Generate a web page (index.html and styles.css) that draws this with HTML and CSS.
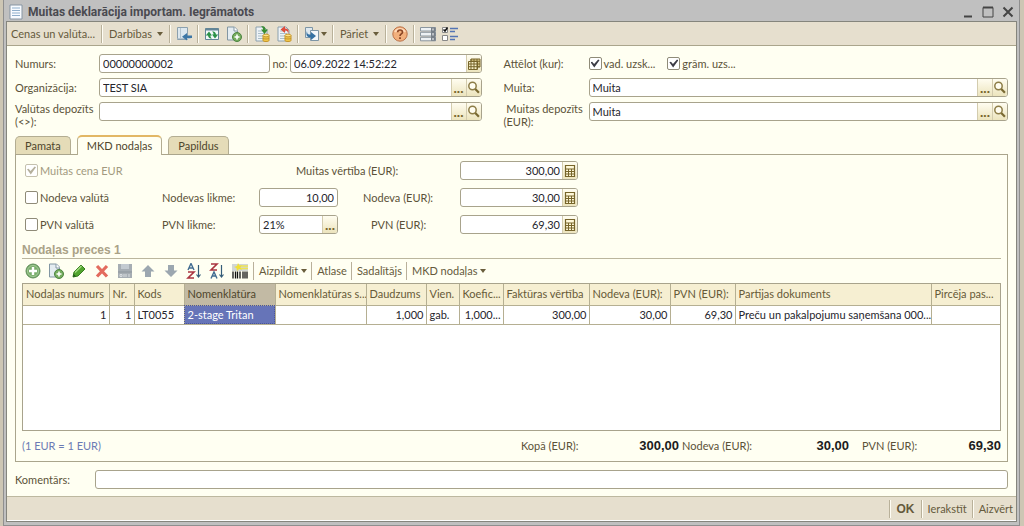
FILE: index.html
```html
<!DOCTYPE html>
<html lang="lv">
<head>
<meta charset="utf-8">
<title>Muitas deklarācija importam</title>
<link rel="stylesheet" href="styles.css">
</head>
<body>
<svg class="defs" aria-hidden="true">
  <symbol id="lens" viewBox="0 0 14 16"><circle cx="5.5" cy="6" r="3.7" fill="#fffdf0" stroke="#8d7d47" stroke-width="1.5"/><path d="M8.3 9l3.6 3.7" stroke="#7a6a32" stroke-width="2.2"/></symbol>
  <symbol id="calc" viewBox="0 0 14 16"><path d="M2.5 2.500h9v11h-9z" fill="#fff8d8" stroke="#77652a" stroke-width="1.200"/><path d="M2.500 6h9M2.500 8.500h9M2.500 11h9M5.500 6v7M8.500 6v7" stroke="#77652a"/></symbol>
  <symbol id="page" viewBox="0 0 16 16"><path d="M2 1h8l3 3v11H2z" fill="#eef3f6" stroke="#8ba0ae"/><path d="M4 5h6M4 7.500h7M4 10h7M4 12.500h5" stroke="#a9bdca"/></symbol>
  <symbol id="plusdoc" viewBox="0 0 16 16"><path d="M1.500 1h7l3 3v10h-10z" fill="#e4ecf1" stroke="#8296a3"/><path d="M8 1v4h4" fill="#fff" stroke="#8296a3"/><circle cx="11" cy="11" r="4.500" fill="#75ac5e" stroke="#4c8340"/><path d="M8.500 11h5M11 8.500v5" stroke="#fff" stroke-width="1.600"/></symbol>
  <symbol id="coins" viewBox="0 0 16 16"><path d="M9 9.500v5c0 1.400 6 1.400 6 0v-5" fill="#f0c64a" stroke="#c5962c"/><ellipse cx="12" cy="9.500" rx="3" ry="1.400" fill="#ffe487" stroke="#c5962c"/><path d="M9 12c0 1.300 6 1.300 6 0" fill="none" stroke="#c5962c"/></symbol>
</svg>
<main class="window">
  <header class="titlebar">
    <svg class="icon" viewBox="0 0 16 16"><path d="M2 1h12v14H2z" fill="#f8fbff" stroke="#8795a3"/><path d="M4 4h8M4 6.500h8M4 9h8M4 11.500h8" stroke="#8faecb"/></svg>
    <h1>Muitas deklarācija importam. Iegrāmatots</h1>
    <div class="winbuttons">
      <button aria-label="Minimizēt"><svg viewBox="0 0 12 12"><path d="M2 10.500h8" stroke="#444" stroke-width="2"/></svg></button>
      <button aria-label="Maksimizēt"><svg viewBox="0 0 12 12"><path d="M1 1.500h10v9.500H1z" fill="none" stroke="#444"/><path d="M1 1.500h10" stroke="#444" stroke-width="2"/></svg></button>
      <button aria-label="Aizvērt logu"><svg viewBox="0 0 12 12"><path d="M1.500 1.500l9 9M10.500 1.500l-9 9" stroke="#444" stroke-width="2"/></svg></button>
    </div>
  </header>
  <div class="frame">
    <nav class="toolbar">
      <button class="text">Cenas un valūta...</button><i class="sep"></i>
      <button class="text">Darbības<b class="caret"></b></button><i class="sep"></i>
      <button aria-label="Atrast sarakstā"><svg class="icon" viewBox="0 0 16 16"><path d="M1.500 1.500h10v12h-10z" fill="#dce7ee" stroke="#8ba0ae"/><path d="M4.500 2v11M1.500 12.500h13" stroke="#b4c4cf"/><path d="M16 9.500h-5V7l-5 3.800 5 3.700V12h5z" fill="#3c76a5"/></svg></button><i class="sep"></i>
      <button aria-label="Atjaunot"><svg class="icon" viewBox="0 0 16 16"><path d="M1.500 2.500h13v11h-13z" fill="#f2f8fa" stroke="#638597"/><path d="M1.500 3.500h13" stroke="#638597" stroke-width="2"/><path d="M5 5.500L1.800 9.500H4c.2 2.500 2 3 4 3C6.500 11.500 6.500 10.500 6.500 9.500H8zM11 12.500l3.200-4H12c-.2-2.500-2-3-4-3 1.500 1 1.500 2 1.500 3H8z" fill="#2a9147"/></svg></button>
      <button aria-label="Kopēt"><svg class="icon"><use href="#plusdoc"/></svg></button><i class="sep"></i>
      <button aria-label="Grāmatot"><svg class="icon" viewBox="0 0 16 16"><use href="#page"/><use href="#coins"/><path d="M7 0c3 0 4.500 1 4.500 3.500H14L10.500 8 7 3.500h2C9 1.500 8 1 7 0z" fill="#3a8d32"/></svg></button>
      <button aria-label="Atcelt grāmatošanu"><svg class="icon" viewBox="0 0 16 16"><use href="#page"/><use href="#coins"/><path d="M12 8c0-3-1-3.500-3-3.500V7L4.500 3.500 9 0v2.500c3 0 4.500 1.500 3 5.500z" fill="#dd4c3b"/></svg></button><i class="sep"></i>
      <button class="drop" aria-label="Ievadīt uz pamata"><svg class="icon" viewBox="0 0 16 16"><path d="M1.500 1.500h7v10h-7z" fill="#dfe9ef" stroke="#7d95a5"/><path d="M6.500 4.500h8v10h-8z" fill="#f3f7fa" stroke="#7d95a5"/><path d="M3 5c0 3 1 3.500 4 3.500V6l5 4-5 4v-2.500C3 11.500 1.500 9 3 5z" fill="#3571a3"/></svg><b class="caret"></b></button><i class="sep"></i>
      <button class="text">Pāriet<b class="caret"></b></button><i class="sep"></i>
      <button aria-label="Palīdzība"><svg class="icon" viewBox="0 0 16 16"><circle cx="8" cy="8" r="7.200" fill="#f2b07c" stroke="#bb7248"/><path d="M3 6c2-4 8-4 10 0" fill="none" stroke="#ffd8b6" stroke-width="2"/><path d="M5.700 6.200c0-3 4.800-3 4.800 0C10.500 8 8 8 8 10" fill="none" stroke="#8a4524" stroke-width="1.600"/><path d="M8 11.300v1.700" stroke="#8a4524" stroke-width="1.800"/></svg></button><i class="sep"></i>
      <button aria-label="Saraksts"><svg class="icon" viewBox="0 0 16 16"><path d="M.5 1.500h15v3.500H.5zM.5 6.300h15V10H.5zM.5 11.300h15v3.500H.5z" fill="#edf1f4" stroke="#8b969f"/><path d="M11 1.500h4.500v13.300H11z" fill="#777f88"/><path d="M13 2.500v2M13 7v2.500M13 12v2" stroke="#fff"/></svg></button>
      <button aria-label="Iestatījumi"><svg class="icon" viewBox="0 0 16 16"><path d="M.5 1.500h5v5h-5zM.5 9.500h5v5h-5z" fill="#fff" stroke="#888"/><path d="M1.500 3.500L3 5l2.500-3.500" fill="none" stroke="#111" stroke-width="1.500"/><path d="M8 2.500h8M8 5.500h5M8 10.500h8M8 13.500h5" stroke="#5475b5" stroke-width="1.600"/></svg></button>
    </nav>
    <form class="content">
      <section class="fields">
        <label for="num">Numurs:</label>
        <div class="pair">
          <input class="box" id="num" value="00000000002">
          <label for="date">no:</label>
          <div class="box combo"><input id="date" value="06.09.2022 14:52:22"><button type="button" aria-label="Kalendārs"><svg viewBox="0 0 14 16"><path d="M4 3h9v8H4z" fill="#d9c987" stroke="#77652a"/><path d="M1.500 5.500h9v8h-9z" fill="#f6eec6" stroke="#77652a"/><path d="M4 3v10M7 3v10M10 3v10M2 8h11M2 10.700h11M4 5.300h9" stroke="#77652a"/></svg></button></div>
        </div>
        <span class="second">Attēlot (kur):</span>
        <div class="checks"><label><input type="checkbox" checked>vad. uzsk...</label><label><input type="checkbox" checked>grām. uzs...</label></div>

        <label for="org">Organizācija:</label>
        <div class="box combo"><input id="org" value="TEST SIA"><button type="button" class="dots">...</button><button type="button" aria-label="Atvērt"><svg><use href="#lens"/></svg></button></div>
        <label class="second" for="muita">Muita:</label>
        <div class="box combo"><input id="muita" value="Muita"><button type="button" class="dots">...</button><button type="button" aria-label="Atvērt"><svg><use href="#lens"/></svg></button></div>

        <label class="two" for="vdep">Valūtas depozīts<br>(&lt;&gt;):</label>
        <div class="box combo"><input id="vdep"><button type="button" class="dots">...</button><button type="button" aria-label="Atvērt"><svg><use href="#lens"/></svg></button></div>
        <label class="second two" for="mdep">&nbsp;Muitas depozīts<br>(EUR):</label>
        <div class="box combo"><input id="mdep" value="Muita"><button type="button" class="dots">...</button><button type="button" aria-label="Atvērt"><svg><use href="#lens"/></svg></button></div>
      </section>

      <div class="tabs"><button type="button">Pamata</button><button type="button" class="active">MKD nodaļas</button><button type="button">Papildus</button></div>
      <section class="panel">
        <div class="rates">
          <label class="off"><input type="checkbox" checked disabled>Muitas cena EUR</label>
          <label class="wide" for="mv">Muitas vērtība (EUR):</label>
          <div class="box combo num"><input id="mv" value="300,00"><button type="button" aria-label="Kalkulators"><svg><use href="#calc"/></svg></button></div>

          <label><input type="checkbox">Nodeva valūtā</label>
          <label for="nl">Nodevas likme:</label>
          <input class="box num" id="nl" value="10,00">
          <label class="mid" for="ne">Nodeva (EUR):</label>
          <div class="box combo num"><input id="ne" value="30,00"><button type="button" aria-label="Kalkulators"><svg><use href="#calc"/></svg></button></div>

          <label><input type="checkbox">PVN valūtā</label>
          <label for="pl">PVN likme:</label>
          <div class="box combo"><input id="pl" value="21%"><button type="button" class="dots">...</button></div>
          <label class="mid pvn" for="pe">PVN (EUR):</label>
          <div class="box combo num"><input id="pe" value="69,30"><button type="button" aria-label="Kalkulators"><svg><use href="#calc"/></svg></button></div>
        </div>
        <h2>Nodaļas preces 1</h2>
        <div class="toolbar inner">
          <button type="button" aria-label="Pievienot"><svg class="icon" viewBox="0 0 16 16"><circle cx="8" cy="8" r="7" fill="#79ad6b" stroke="#5e8d58"/><circle cx="8" cy="8" r="5.500" fill="none" stroke="#a5cb99"/><path d="M4 8h8M8 4v8" stroke="#fff" stroke-width="2.400"/></svg></button>
          <button type="button" aria-label="Kopēt rindu"><svg class="icon"><use href="#plusdoc"/></svg></button>
          <button type="button" aria-label="Labot"><svg class="icon" viewBox="0 0 16 16"><path d="M2 14l1-5 7-7 4 4-7 7z" fill="#52a52f" stroke="#377d22"/><path d="M4 9.500L10.500 3" stroke="#a5db84" stroke-width="1.500"/><path d="M2 14l.7-3L5 13.300z" fill="#22551a"/></svg></button>
          <button type="button" aria-label="Dzēst"><svg class="icon" viewBox="0 0 16 16"><path d="M3 3l10 10.500M13 3L3 13.500" stroke="#e36b5e" stroke-width="3.200"/></svg></button>
          <button type="button" aria-label="Pabeigt labošanu"><svg class="icon" viewBox="0 0 16 16"><path d="M1 1h14v14H1z" fill="#a6adb3"/><path d="M4 1h8v5H4z" fill="#c3cad0"/><path d="M1 9h14" stroke="#8d959c"/><path d="M3 11.500h2v2H3zM7 11v3M9 11v3M12 11v3" fill="none" stroke="#d9dde0"/></svg></button>
          <button type="button" aria-label="Uz augšu"><svg class="icon" viewBox="0 0 16 16"><path d="M8 2l6.500 6.500H11V14H5V8.500H1.500z" fill="#9ca7b0"/></svg></button>
          <button type="button" aria-label="Uz leju"><svg class="icon" viewBox="0 0 16 16"><path d="M8 14L1.500 7.500H5V2h6v5.500h3.500z" fill="#9ca7b0"/></svg></button>
          <button type="button" aria-label="Kārtot augoši"><svg class="icon" viewBox="0 0 16 16"><path d="M2 7l3-6.500L8 7M3 5h4" fill="none" stroke="#426c91" stroke-width="1.400"/><path d="M2 9h6l-6 6h6" fill="none" stroke="#aa3440" stroke-width="1.600"/><path d="M12.500 2v12M10.500 11.500l2 2.500 2-2.500" fill="none" stroke="#345c78" stroke-width="1.200"/></svg></button>
          <button type="button" aria-label="Kārtot dilstoši"><svg class="icon" viewBox="0 0 16 16"><path d="M2 1h6L2 7h6" fill="none" stroke="#aa3440" stroke-width="1.600"/><path d="M2 15.500L5 9l3 6.500M3 13h4" fill="none" stroke="#426c91" stroke-width="1.400"/><path d="M12.500 2v12M10.500 11.500l2 2.500 2-2.500" fill="none" stroke="#345c78" stroke-width="1.200"/></svg></button>
          <button type="button" aria-label="Svītrkods"><svg class="icon" viewBox="0 0 16 16"><path d="M0 1h16v7H0z" fill="#d1d6d5"/><path d="M6 0l1.500 2.500L10 2 8.500 4.500 10 7 7 6 5 8 4.500 5 2 4l3-1z" fill="#f0df35"/><path d="M9 3h7M9 5.500h7" stroke="#eee454" stroke-width="1.500"/><path d="M1 8.500v7M3.500 8.500v7M5.500 8.500v7M8 8.500v7M11 8.500v7M13 8.500v7M15 8.500v7" stroke="#111" stroke-width="1.300"/></svg></button><i class="sep"></i>
          <button type="button" class="text">Aizpildīt<b class="caret"></b></button><i class="sep"></i>
          <button type="button" class="text">Atlase</button><i class="sep"></i>
          <button type="button" class="text">Sadalītājs</button><i class="sep"></i>
          <button type="button" class="text">MKD nodaļas<b class="caret"></b></button>
        </div>
        <div class="grid">
          <table>
            <colgroup><col class="w86"><col class="w25"><col class="w50"><col class="w91"><col class="w91"><col class="w60"><col class="w33"><col class="w44"><col class="w86"><col class="w81"><col class="w65"><col><col class="w69"></colgroup>
            <thead><tr><th>Nodaļas numurs</th><th>Nr.</th><th>Kods</th><th class="sel">Nomenklatūra</th><th>Nomenklatūras s...</th><th>Daudzums</th><th>Vien.</th><th>Koefic...</th><th>Faktūras vērtība</th><th>Nodeva (EUR):</th><th>PVN (EUR):</th><th>Partijas dokuments</th><th>Pircēja pas...</th></tr></thead>
            <tbody><tr><td class="r">1</td><td class="r">1</td><td>LT0055</td><td class="cur">2-stage Tritan</td><td></td><td class="r">1,000</td><td>gab.</td><td class="r">1,000...</td><td class="r">300,00</td><td class="r">30,00</td><td class="r">69,30</td><td>Preču un pakalpojumu saņemšana 000...</td><td></td></tr></tbody>
          </table>
        </div>
        <div class="totals"><span class="rate">(1 EUR = 1 EUR)</span><span>Kopā (EUR):</span><strong>300,00</strong><span class="t2">Nodeva (EUR):</span><strong>30,00</strong><span class="t3">PVN (EUR):</span><strong>69,30</strong></div>
      </section>
      <div class="comment"><label for="com">Komentārs:</label><input class="box" id="com"></div>
    </form>
    <footer class="toolbar bottom"><i class="sep"></i><button class="ok">OK</button><i class="sep"></i><button class="text">Ierakstīt</button><i class="sep"></i><button class="text">Aizvērt</button></footer>
  </div>
</main>
</body>
</html>
```
FILE: styles.css
```css
* { box-sizing: border-box; }
body { margin: 0; background: #cdc6b4; color: #5b5238; font: 11px/16px Lato, "Liberation Sans", Arial, sans-serif; }
button, input { font: inherit; color: inherit; margin: 0; padding: 0; border: 0; background: none; }
.defs { position: absolute; width: 0; height: 0; }
.icon { width: 16px; height: 16px; display: block; }

.window { min-height: 100vh; margin: 0 4px 0 3px; padding: 0 2px 3px; background: #c0c0c0; border: 1px solid #8f8f8f; border-top: 0; display: flex; flex-direction: column; }
.titlebar { height: 21px; display: flex; align-items: center; padding: 2px 0 0 2px; }
.titlebar h1 { flex: 1; margin: 0 0 0 4px; font: bold 12px/16px Roboto, "Liberation Sans", Arial, sans-serif; color: #4a4a50; }
.winbuttons { display: flex; gap: 8px; padding-right: 3px; }
.winbuttons button, .winbuttons svg { width: 12px; height: 12px; display: block; }

.frame { flex: 1; display: flex; flex-direction: column; border: 1px solid #85857d; background: #fffff2; }
.toolbar { height: 24px; display: flex; align-items: center; background: #e6dfce; border-bottom: 1px solid #aaa58c; }
.toolbar button { display: flex; align-items: center; padding: 0 3px; white-space: nowrap; color: #655a3c; }
.toolbar .text { padding: 0 4px; }
.sep { width: 2px; height: 18px; margin: 0 2px; background: #b9b19a; border-right: 1px solid #fffdf4; }
.caret { margin-left: 5px; border: 3px solid transparent; border-top: 4px solid #695d3c; border-bottom: 0; }
.drop .caret { margin-left: 1px; }

.content { flex: 1; display: flex; flex-direction: column; padding: 8px 8px 7px 8px; }
.fields { display: grid; grid-template-columns: 84px minmax(0, 383fr) 107px minmax(0, 420fr); row-gap: 5px; grid-auto-rows: 19px; align-items: center; }
.second { padding-left: 22px; }
.two { line-height: 13px; align-self: start; white-space: nowrap; }
.pair { display: grid; grid-template-columns: 171px 20px 1fr; align-items: center; }
.pair label { text-align: center; }
.box { height: 19px; width: 100%; min-width: 0; background: #fff; border: 1px solid #a8a38c; border-radius: 3px; padding: 0 3px; color: #25252c; }
.combo { display: flex; padding: 0 0 0 3px; overflow: hidden; }
.combo input { flex: 1; min-width: 0; }
.combo button { width: 15px; border-left: 1px solid #d3ccae; background: linear-gradient(#fffdf0, #ece4bd); color: #77652a; }
.combo svg { width: 14px; height: 16px; display: block; }
.combo .dots { font-size: 14px; font-weight: bold; }
.num, .num input { text-align: right; }
.num input { padding-right: 2px; }
.checks { display: flex; gap: 12px; }
.checks label, .rates label { display: flex; align-items: center; gap: 2px; white-space: nowrap; }
input[type="checkbox"] { appearance: none; width: 13px; height: 13px; border: 1px solid #8f8b78; border-radius: 2px; background: #fff; display: grid; place-items: center; }
input[type="checkbox"]:checked::before { content: ""; width: 9px; height: 9px; background: #3c3c46; clip-path: polygon(0 35%, 18% 30%, 40% 55%, 85% 5%, 100% 15%, 42% 95%); }
.off { color: #a29a80; }
.off input[type="checkbox"]:checked::before { background: #b5b09c; }
.off input[type="checkbox"] { border-color: #c5c1ae; }

.tabs { display: flex; align-items: flex-end; gap: 6px; margin-top: 14px; }
.tabs button { height: 18px; padding: 0 9px; background: #e5dcb8; border: 1px solid #b3ad92; border-bottom: 0; border-radius: 5px 5px 0 0; color: #4f462c; }
.tabs .active { height: 20px; margin-bottom: -1px; background: #fffff2; border-top: 2px solid #e2b765; position: relative; }
.panel { flex: 1; display: flex; flex-direction: column; border: 1px solid #aaa58c; padding: 6px 6px 7px 6px; }
.rates { display: grid; grid-template-columns: 137px 97px 79px 25px 97px 118px; padding-left: 3px; row-gap: 8px; align-items: center; }
.rates .wide { grid-column: 2 / 6; padding-left: 134px; }
.rates .mid { grid-column: 4 / 6; padding-left: 25px; }
.rates .pvn { padding-left: 33px; }
.panel h2 { margin: 9px 0 0; font: bold 12px/15px "Liberation Sans", Arial, sans-serif; color: #aaa287; border-bottom: 1px solid #bbb69e; }
.inner { background: none; border: 0; padding: 0; }
.inner button { padding: 0 4px 0 3px; }
.inner .text { padding: 0 3px; }
.inner .caret { margin-left: 3px; }
.inner .sep { margin: 0 1px; }
.grid { flex: 1; min-height: 120px; background: #fff; border: 1px solid #a8a38c; }
table { width: 100%; border-collapse: collapse; table-layout: fixed; }
th, td { border-right: 1px solid #b5af92; border-bottom: 1px solid #b5af92; padding: 0 2px 0 3px; font-weight: normal; text-align: left; white-space: nowrap; overflow: hidden; }
th:last-child, td:last-child { border-right: 0; }
th { height: 21px; background: #f6efd2; color: #665a38; }
td { height: 19px; color: #25252c; }
.r { text-align: right; }
.sel { background: #c2baa4; color: #4f462c; }
.cur { background: #6674b8; color: #fff; outline: 1px dotted #4a549a; outline-offset: -1px; }
.w25 { width: 25px; } .w33 { width: 33px; } .w44 { width: 44px; } .w50 { width: 50px; }
.w60 { width: 60px; } .w65 { width: 65px; } .w69 { width: 69px; } .w81 { width: 81px; }
.w86 { width: 86px; } .w91 { width: 91px; }
.totals { display: grid; grid-template-columns: 1fr 60px 98px 76px 94px 76px 76px; align-items: center; margin-top: 7px; white-space: nowrap; }
.totals strong { font: bold 13px/16px "Liberation Sans", Arial, sans-serif; color: #1c1c1c; text-align: right; }
.t2 { padding-left: 3px; }
.t3 { padding-left: 13px; }
.rate { color: #6b7bb4; }
.comment { display: grid; grid-template-columns: 80px 1fr; align-items: center; margin-top: 8px; }
.bottom { height: 25px; border-top: 1px solid #bdb8a0; border-bottom: 1px solid #fff; justify-content: flex-end; }
.bottom .text { padding: 0 3px; }
.bottom .ok { font: bold 12px/16px "Liberation Sans", Arial, sans-serif; padding: 0 4px; }
```
